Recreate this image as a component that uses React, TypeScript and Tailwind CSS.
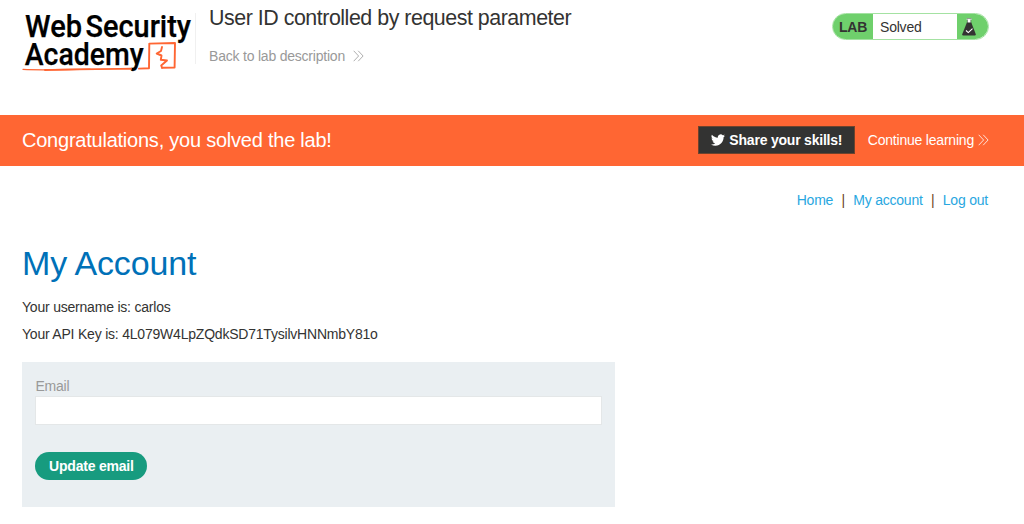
import React from 'react';

function Logo() {
  return (
    <svg className="block h-[72px] w-[172px] overflow-visible" viewBox="22 5 172 72" role="img" aria-label="Web Security Academy">
      <g fill="#000" stroke="#000" strokeWidth="0.25" fontFamily="Roboto, 'Liberation Sans', sans-serif" fontWeight="500" fontSize="32">
        <text x="25" y="37.3" textLength="57" lengthAdjust="spacingAndGlyphs">Web</text>
        <text x="85.5" y="37.3" textLength="105.5" lengthAdjust="spacingAndGlyphs">Security</text>
        <text x="24.7" y="64.8" textLength="119" lengthAdjust="spacingAndGlyphs">Academy</text>
      </g>
      <g fill="none" stroke="#ff6633" strokeLinejoin="round" strokeLinecap="round">
        <path d="M23 69.4 C45 70.5 65 69.3 90 69.1" strokeWidth="1.3" />
        <path d="M45 70 C75 69.2 110 69 131 68.8 M139 68.6 L149 68.3 L149.3 43.6 L175 43 L174.6 67.6 L162 67.7" strokeWidth="1.9" />
        <path d="M162 47 L161 51 L156.7 53.5 L161.5 55.5 L160.8 59.8 L167 60.5 L161.2 65.5 L162 67.7" strokeWidth="1.9" />
      </g>
    </svg>
  );
}

function Chevrons({ className }: { className: string }) {
  return (
    <svg className={className} viewBox="0 0 11 12" fill="none" stroke="currentColor" strokeWidth="0.8">
      <path d="M.7 .8 5.6 6 .7 11.2M5.2 .8 10.1 6l-4.9 5.2" />
    </svg>
  );
}

function Flask() {
  return (
    <svg className="h-[18px] w-[14px]" viewBox="0 0 14 18">
      <path d="M4.6 .3h5v1.4h-.8v4h-3.4v-4h-.8z" fill="#fff" />
      <path d="M4.6 .6h5M5.4 1.5v4M8.8 1.5v4" stroke="#333332" strokeWidth=".5" />
      <path d="M4.9 4.6h4.4l4.5 11.6c.2.7-.2 1.2-.8 1.2H1c-.6 0-1-.5-.8-1.2z" fill="#333332" />
      <path d="m4 12.5 2.3 2.1 4.2-4" fill="none" stroke="#fff" strokeWidth="1.1" />
    </svg>
  );
}

function Bird() {
  return (
    <svg className="h-[14px] w-[14px]" viewBox="0 0 24 24" fill="#fff">
      <path d="M23.95 4.57a10 10 0 0 1-2.82.77 4.96 4.96 0 0 0 2.16-2.72c-.95.56-2 .96-3.13 1.19a4.92 4.92 0 0 0-8.38 4.48C7.69 8.1 4.07 6.13 1.64 3.16a4.92 4.92 0 0 0 1.52 6.57 4.9 4.9 0 0 1-2.23-.61v.06a4.92 4.92 0 0 0 3.95 4.83 5 5 0 0 1-2.21.08 4.94 4.94 0 0 0 4.6 3.42A9.87 9.87 0 0 1 0 19.54a14 14 0 0 0 7.55 2.21c9.05 0 14-7.5 14-13.99 0-.21 0-.42-.02-.63a9.94 9.94 0 0 0 2.46-2.55z" />
    </svg>
  );
}

export default function App() {
  return (
    <div className="h-[524px] w-full overflow-hidden bg-white font-['Liberation_Sans',Arial,sans-serif] text-[14px] leading-[18px] tracking-[-0.21px] text-[#333332]">
      <header className="flex h-[115px] pr-[35px] pl-[22px]">
        <div className="pt-[5px] tracking-normal"><Logo /></div>
        <div className="mt-[13px] ml-px h-[51px] w-px bg-[#f0f0f0]" />
        <div className="ml-[13px] flex-1">
          <h2 className="mt-[6px] text-[21.4px] leading-6 tracking-[-0.47px]">User ID controlled by request parameter</h2>
          <a className="mt-[17px] flex items-center text-[#999999]">
            Back to lab description<Chevrons className="ml-2 h-3 w-[11px]" />
          </a>
        </div>
        <div className="mt-[13px] flex h-[27px] w-[157px] overflow-hidden rounded-full border border-[#a4e2a2] bg-white">
          <div className="flex w-[40px] items-center bg-[#6fd06c] pl-[6px] font-bold">LAB</div>
          <div className="flex flex-1 items-center pl-[7px]">Solved</div>
          <div className="flex w-[31px] items-center rounded-r-full bg-[#6fd06c] pl-[5px]"><Flask /></div>
        </div>
      </header>
      <section className="flex h-[51px] items-center bg-[#ff6633] pr-[35px] pl-[22px] text-white">
        <h4 className="mt-[-2px] flex-1 text-[20px] leading-6 tracking-[-0.23px]">Congratulations, you solved the lab!</h4>
        <button className="mt-[-1px] flex h-7 w-[157px] items-center justify-center gap-1 border border-[#6e432d] bg-[#333332] font-bold">
          <Bird />Share your skills!
        </button>
        <a className="mt-[-1px] ml-[12.5px] flex items-center">Continue learning<Chevrons className="ml-1 h-3 w-[11px]" /></a>
      </section>
      <nav className="mt-[25px] mr-[36px] flex justify-end text-[#29a7df]">
        <a>Home</a><span className="mx-[8.3px] text-[#6b3f22]">|</span><a>My account</a><span className="mx-[8.3px] text-[#6b3f22]">|</span><a>Log out</a>
      </nav>
      <main className="pl-[22px]">
        <h1 className="mt-[34px] text-[34px] leading-10 tracking-[-0.15px] text-[#0071b8]">My Account</h1>
        <p className="mt-[15px]">Your username is: carlos</p>
        <p className="mt-[9px]">Your API Key is: 4L079W4LpZQdkSD71TysilvHNNmbY81o</p>
        <form className="mt-[19px] h-[145px] w-[593.4px] bg-[#eaeff2] px-[13.4px] pt-[15px]">
          <label className="block text-[#999999]" htmlFor="email">Email</label>
          <input id="email" className="mt-px block h-[29px] w-full border border-[#e4e7e8] bg-white px-2 outline-none" />
          <button type="button" className="mt-[27px] block h-7 w-[112px] rounded-full bg-[#179b7f] font-bold text-white">Update email</button>
        </form>
      </main>
    </div>
  );
}
